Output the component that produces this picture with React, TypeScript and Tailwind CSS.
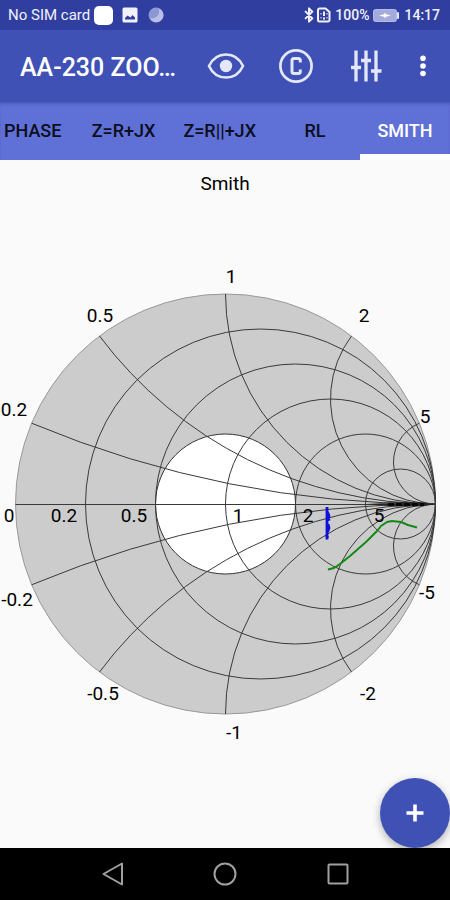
import { useState } from 'react';
import { Bluetooth } from 'lucide-react';
import clsx from 'clsx';

const TABS = ['PHASE', 'Z=R+JX', 'Z=R||+JX', 'RL', 'SMITH'];

// chart geometry, in viewBox units
const CX = 225.5;
const CY = 244;
const R = 210;

const RESISTANCES = [0.2, 0.5, 1, 2, 5];
const REACTANCES = [0.2, 0.5, 1, 2, 5];

const LABELS = [
  { text: '1', x: 231, y: 23 },
  { text: '0.5', x: 100, y: 62 },
  { text: '2', x: 364, y: 62 },
  { text: '0.2', x: 14, y: 156 },
  { text: '5', x: 425, y: 163 },
  { text: '0', x: 9, y: 262 },
  { text: '0.2', x: 64, y: 262 },
  { text: '0.5', x: 134, y: 262 },
  { text: '1', x: 238, y: 262 },
  { text: '2', x: 308, y: 262 },
  { text: '5', x: 379, y: 262 },
  { text: '-0.2', x: 17, y: 346 },
  { text: '-5', x: 427, y: 339 },
  { text: '-0.5', x: 103, y: 440 },
  { text: '-2', x: 368, y: 440 },
  { text: '-1', x: 234, y: 479 },
];

// arc of constant reactance, from the rim to the open-circuit point
function reactanceArc(x: number, sign: 1 | -1) {
  const d = x * x + 1;
  const startX = CX + (R * (x * x - 1)) / d;
  const startY = CY - (sign * R * 2 * x) / d;
  const r = R / x;
  return `M${startX} ${startY}A${r} ${r} 0 0 ${sign === 1 ? 0 : 1} ${CX + R} ${CY}`;
}

function SmithChart() {
  return (
    <svg viewBox="0 0 450 488" className="block h-auto w-full" role="img" aria-label="Smith">
      <circle cx={CX} cy={CY} r={R} fill="#cccccc" stroke="#999999" strokeWidth="1" />
      <circle cx={CX} cy={CY} r={R / 3} fill="#ffffff" stroke="#333333" strokeWidth="1" />
      <g fill="none" stroke="#3a3a3a" strokeWidth="1">
        <path d={`M${CX - R} ${CY + 0.5}H${CX + R}`} />
        {RESISTANCES.map((r) => (
          <circle key={r} cx={CX + (R * r) / (r + 1)} cy={CY} r={R / (r + 1)} />
        ))}
        {REACTANCES.map((x) => (
          <g key={x}>
            <path d={reactanceArc(x, 1)} />
            <path d={reactanceArc(x, -1)} />
          </g>
        ))}
      </g>
      {/* lines crowd together close to the open-circuit point */}
      <path d="M366 244L388 242.500L398 242L420 242L435 244.500L420 246.500L398 246.500L388 246Z" fill="#1a1a1a" fillOpacity="0.65" />
      <path d="M388 244.500H424" stroke="#000000" strokeWidth="3" strokeDasharray="6 2" strokeOpacity="0.8" />
      <g fill="#000000" fontSize="19" textAnchor="middle" fontFamily="Roboto, sans-serif">
        {LABELS.map((label) => (
          <text key={`${label.x}-${label.y}`} x={label.x} y={label.y}>
            {label.text}
          </text>
        ))}
      </g>
      <path
        d="M327 247V279.500M327.500 252L329 256L327.500 260L330 259M328 264L329 268L327.500 272M326 275L328 278"
        fill="none"
        stroke="#1010d8"
        strokeWidth="2.800"
        strokeLinejoin="round"
      />
      <path
        d="M328 309.500L334 308L340 304L350 296L358 289L366 282L377 271L381 266L387 262L392 261L401 262L408 265L417 267.500"
        fill="none"
        stroke="#138a13"
        strokeWidth="2"
        strokeLinejoin="round"
      />
    </svg>
  );
}

function StatusBar() {
  return (
    <div className="flex h-[30px] items-center justify-between bg-[#303f9f] pr-[10px] pl-2 text-[#f0f1fb]">
      <div className="flex items-center text-[15px]">
        <span>No SIM card</span>
        <span className="ml-1 size-[19px] rounded-[5px] bg-white" />
        <svg viewBox="0 0 16 16" className="ml-[9px] size-4" aria-hidden="true">
          <path
            fillRule="evenodd"
            fill="#f0f1fb"
            d="M2 0.500H14A1.500 1.500 0 0 1 15.500 2V14A1.500 1.500 0 0 1 14 15.500H2A1.500 1.500 0 0 1 .5 14V2A1.500 1.500 0 0 1 2 .5ZM3 12.500H13V10.500L10.500 8L8.500 10.500L5.500 8.500L3 11Z"
          />
        </svg>
        <svg viewBox="0 0 16 16" className="ml-[10px] size-4" aria-hidden="true">
          <circle cx="8" cy="8" r="7.500" fill="#8d97d3" />
          <path d="M10.500 1.500A7 7 0 1 1 2 11A7 7 0 0 0 10.500 1.500Z" fill="#b9c0e8" />
        </svg>
      </div>
      <div className="flex items-center text-[14px] font-medium">
        <Bluetooth className="size-4" strokeWidth={3} aria-hidden="true" />
        <svg viewBox="0 0 14 16" className="h-4 w-[14px]" fill="none" stroke="#f0f1fb" aria-hidden="true">
          <path strokeWidth="2" d="M2.500 1.500H8.500L12.500 5V13A1.500 1.500 0 0 1 11 14.500H2.500A1.500 1.500 0 0 1 1 13V3A1.500 1.500 0 0 1 2.500 1.500Z" />
          <path strokeWidth="2" d="M7 4.500V9M7 10.500V12.500" />
          <path strokeWidth="1" d="M4 6V7.500M4 10V11.500M10 6V7.500M10 10V11.500" />
        </svg>
        <span className="ml-1">100%</span>
        <svg viewBox="0 0 27 13" className="ml-1 h-[13px] w-[27px]" aria-hidden="true">
          <rect x="0.500" y="0.500" width="23" height="12" rx="2" fill="#a3abdc" stroke="#b4bae4" />
          <rect x="24" y="3" width="2" height="7" rx="1" fill="#e4e7fa" />
          <path d="M6 6.500L11 5.200L12 3.500L13 5.200L18 6.500L13 7.800L12 9.500L11 7.800Z" fill="#ffffff" />
        </svg>
        <span className="ml-1">14:17</span>
      </div>
    </div>
  );
}

function Toolbar() {
  return (
    <header className="flex h-[72px] items-center bg-[#3f51b5] pr-[5px] pl-5 text-[#e4e7fa]">
      <h1 className="min-w-0 flex-1 truncate pt-1 text-[25px] font-medium text-white">AA-230 ZOO…</h1>
      <div className="flex shrink-0 items-center">
        <button type="button" aria-label="View" className="flex h-12 w-[70px] items-center justify-center">
          <svg viewBox="0 0 38 28" className="h-7 w-[38px]" fill="none">
            <path
              d="M2 14C5.500 6.500 11.500 2.500 19 2.500S32.500 6.500 36 14C32.500 21.500 26.500 25.500 19 25.500S5.500 21.500 2 14Z"
              stroke="currentColor"
              strokeWidth="2.600"
            />
            <circle cx="19" cy="14" r="6.200" fill="currentColor" />
          </svg>
        </button>
        <button type="button" aria-label="Calibration" className="flex h-12 w-[70px] items-center justify-center">
          <svg viewBox="0 0 36 36" className="size-9" fill="none" stroke="currentColor">
            <circle cx="18" cy="18" r="15.600" strokeWidth="2.700" />
            <path d="M22.300 14.500V12.500A2 2 0 0 0 20.300 10.500H16A2 2 0 0 0 14 12.500V23.500A2 2 0 0 0 16 25.500H20.300A2 2 0 0 0 22.300 23.500V21.500" strokeWidth="3" />
          </svg>
        </button>
        <button type="button" aria-label="Settings" className="flex h-12 w-[70px] items-center justify-center">
          <svg viewBox="0 0 32 32" className="size-8" fill="none" stroke="currentColor" strokeWidth="3.300">
            <path d="M6 0.500V31.500M16 0.500V31.500M26 0.500V31.500M1 17.500H11M11 10.500H21M21 21H31.500" />
          </svg>
        </button>
        <button type="button" aria-label="More options" className="flex h-12 w-11 items-center justify-center">
          <svg viewBox="0 0 6 22" className="h-[22px] w-[6px]" fill="#ffffff">
            <circle cx="3" cy="3.200" r="2.800" />
            <circle cx="3" cy="11" r="2.800" />
            <circle cx="3" cy="18.500" r="2.800" />
          </svg>
        </button>
      </div>
    </header>
  );
}

export default function App() {
  const [activeTab, setActiveTab] = useState('SMITH');

  return (
    <div className="flex min-h-screen flex-col overflow-hidden bg-[#fafafa] font-[Roboto,sans-serif]">
      <StatusBar />
      <Toolbar />
      <nav role="tablist" className="flex h-[58px] justify-end overflow-hidden bg-[#5f70d6] shadow-[inset_0_3px_3px_-1px_#4a5ac0]">
        {TABS.map((tab) => (
          <button
            key={tab}
            type="button"
            role="tab"
            aria-selected={tab === activeTab}
            onClick={() => setActiveTab(tab)}
            className={clsx(
              'min-w-[90px] shrink-0 border-b-[6px] px-[14px] pt-1 text-[18px] font-medium',
              tab === activeTab ? 'border-b-white text-white' : 'border-b-transparent text-[#0c0e1c]'
            )}
          >
            {tab}
          </button>
        ))}
      </nav>

      <main className="relative flex-1 pt-3">
        <h2 className="text-center text-[19px] leading-6 text-black">Smith</h2>
        <div className="mt-16">
          <SmithChart />
        </div>
        <button
          type="button"
          aria-label="Add"
          className="absolute right-0 bottom-0 flex size-[70px] items-center justify-center rounded-full bg-[#3f51b5] shadow-[0_3px_8px_rgba(0,0,0,0.3)]"
        >
          <svg viewBox="0 0 18 18" className="size-[18px]" stroke="#ffffff" strokeWidth="3.600">
            <path d="M9 0.500V17.500M0.500 9H17.500" />
          </svg>
        </button>
      </main>

      <div className="h-[52px] bg-black">
        <div className="mx-auto grid h-full w-3/4 grid-cols-3 text-[#a0a0a0]">
          <button type="button" aria-label="Back" className="flex items-center justify-center">
            <svg viewBox="0 0 24 24" className="size-6" fill="none" stroke="currentColor" strokeWidth="2" strokeLinejoin="round">
              <path d="M21 1.500V22.500L2.500 12Z" />
            </svg>
          </button>
          <button type="button" aria-label="Home" className="flex items-center justify-center">
            <svg viewBox="0 0 24 24" className="size-6" fill="none" stroke="currentColor" strokeWidth="2">
              <circle cx="12" cy="12" r="10.500" />
            </svg>
          </button>
          <button type="button" aria-label="Recent apps" className="flex items-center justify-center">
            <svg viewBox="0 0 24 24" className="size-6" fill="none" stroke="currentColor" strokeWidth="2">
              <rect x="2.500" y="2.500" width="19" height="19" rx="1" />
            </svg>
          </button>
        </div>
      </div>
    </div>
  );
}
